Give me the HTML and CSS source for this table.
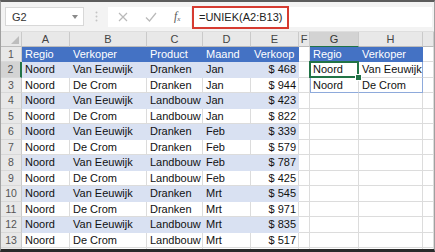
FILE: index.html
```html
<!DOCTYPE html>
<html lang="nl">
<head>
<meta charset="utf-8">
<link rel="stylesheet" href="styles.css">
</head>
<body>
<div class="frame">
  <div class="fbar">
    <div class="namebox"><span>G2</span><span class="caret"></span></div>
    <div class="grip"><svg width="3" height="11" viewBox="0 0 3 11"><circle cx="1.5" cy="1.5" r="1" fill="#c4c4c4"/><circle cx="1.5" cy="5.5" r="1" fill="#c4c4c4"/><circle cx="1.5" cy="9.5" r="1" fill="#c4c4c4"/></svg></div>
    <div class="fxbox">
      <svg class="ico" width="10" height="10" viewBox="0 0 10 10"><path d="M1 1 L9 9 M9 1 L1 9" stroke="#b9b9b9" stroke-width="1.2" fill="none"/></svg>
      <svg class="ico" width="12" height="10" viewBox="0 0 12 10"><path d="M1 5.5 L4.5 9 L11 1" stroke="#b9b9b9" stroke-width="1.2" fill="none"/></svg>
      <span class="fx">f<sub>x</sub></span>
    </div>
    <div class="formula"><span class="hl">=UNIEK(A2:B13)</span></div>
  </div>
  <div class="sheet">
    <div class="corner"><span class="tri"></span></div>
    <div class="ch">A</div><div class="ch">B</div><div class="ch">C</div><div class="ch">D</div><div class="ch">E</div><div class="ch">F</div><div class="ch sel">G</div><div class="ch">H</div><div class="ch"></div>

    <div class="rh">1</div>
    <div class="c hd">Regio</div><div class="c hd">Verkoper</div><div class="c hd">Product</div><div class="c hd">Maand</div><div class="c hd">Verkoop</div><div class="c"></div><div class="c hd">Regio</div><div class="c hd">Verkoper</div><div class="c"></div>

    <div class="rh sel">2</div>
    <div class="c bd">Noord</div><div class="c bd">Van Eeuwijk</div><div class="c bd">Dranken</div><div class="c bd">Jan</div><div class="c bd r">$ 468</div><div class="c"></div><div class="c tl active">Noord</div><div class="c tr">Van Eeuwijk</div><div class="c"></div>

    <div class="rh">3</div>
    <div class="c">Noord</div><div class="c">De Crom</div><div class="c">Dranken</div><div class="c">Jan</div><div class="c r">$ 944</div><div class="c"></div><div class="c tbl">Noord</div><div class="c tbr">De Crom</div><div class="c"></div>

    <div class="rh">4</div>
    <div class="c bd">Noord</div><div class="c bd">Van Eeuwijk</div><div class="c bd">Landbouw</div><div class="c bd">Jan</div><div class="c bd r">$ 423</div><div class="c"></div><div class="c"></div><div class="c"></div><div class="c"></div>

    <div class="rh">5</div>
    <div class="c">Noord</div><div class="c">De Crom</div><div class="c">Landbouw</div><div class="c">Jan</div><div class="c r">$ 822</div><div class="c"></div><div class="c"></div><div class="c"></div><div class="c"></div>

    <div class="rh">6</div>
    <div class="c bd">Noord</div><div class="c bd">Van Eeuwijk</div><div class="c bd">Dranken</div><div class="c bd">Feb</div><div class="c bd r">$ 339</div><div class="c"></div><div class="c"></div><div class="c"></div><div class="c"></div>

    <div class="rh">7</div>
    <div class="c">Noord</div><div class="c">De Crom</div><div class="c">Dranken</div><div class="c">Feb</div><div class="c r">$ 579</div><div class="c"></div><div class="c"></div><div class="c"></div><div class="c"></div>

    <div class="rh">8</div>
    <div class="c bd">Noord</div><div class="c bd">Van Eeuwijk</div><div class="c bd">Landbouw</div><div class="c bd">Feb</div><div class="c bd r">$ 787</div><div class="c"></div><div class="c"></div><div class="c"></div><div class="c"></div>

    <div class="rh">9</div>
    <div class="c">Noord</div><div class="c">De Crom</div><div class="c">Landbouw</div><div class="c">Feb</div><div class="c r">$ 425</div><div class="c"></div><div class="c"></div><div class="c"></div><div class="c"></div>

    <div class="rh">10</div>
    <div class="c bd">Noord</div><div class="c bd">Van Eeuwijk</div><div class="c bd">Dranken</div><div class="c bd">Mrt</div><div class="c bd r">$ 545</div><div class="c"></div><div class="c"></div><div class="c"></div><div class="c"></div>

    <div class="rh">11</div>
    <div class="c">Noord</div><div class="c">De Crom</div><div class="c">Dranken</div><div class="c">Mrt</div><div class="c r">$ 971</div><div class="c"></div><div class="c"></div><div class="c"></div><div class="c"></div>

    <div class="rh">12</div>
    <div class="c bd">Noord</div><div class="c bd">Van Eeuwijk</div><div class="c bd">Landbouw</div><div class="c bd">Mrt</div><div class="c bd r">$ 835</div><div class="c"></div><div class="c"></div><div class="c"></div><div class="c"></div>

    <div class="rh">13</div>
    <div class="c">Noord</div><div class="c">De Crom</div><div class="c">Landbouw</div><div class="c">Mrt</div><div class="c r">$ 517</div><div class="c"></div><div class="c"></div><div class="c"></div><div class="c"></div>

    <div class="rh"></div>
    <div class="c"></div><div class="c"></div><div class="c"></div><div class="c"></div><div class="c"></div><div class="c"></div><div class="c"></div><div class="c"></div><div class="c"></div>
  </div>
</div>
</body>
</html>
```
FILE: styles.css
```css
html, body {
  margin: 0;
  padding: 0;
  background: #fff;
}
.frame {
  width: 435px;
  height: 252px;
  box-sizing: border-box;
  border-top: 2px solid #5c5c5c;
  border-bottom: 3px solid #2a2a2a;
  border-left: 1px solid #a0a0a0;
  border-right: 1px solid #a0a0a0;
  overflow: hidden;
  font-family: "Liberation Sans", Arial, sans-serif;
  background: #fff;
}
.fbar {
  height: 30px;
  box-sizing: border-box;
  background: #f3f3f3;
  display: flex;
  align-items: center;
  padding: 0 2px 0 4px;
  border-bottom: 1px solid #dedede;
}
.namebox {
  width: 79px;
  height: 19px;
  box-sizing: border-box;
  background: #fff;
  border: 1px solid #d8d8d8;
  display: flex;
  align-items: center;
  justify-content: space-between;
  padding: 0 5px 0 6px;
  font-size: 11px;
  color: #333;
}
.caret {
  width: 0;
  height: 0;
  border-left: 3px solid transparent;
  border-right: 3px solid transparent;
  border-top: 4px solid #8a8a8a;
}
.grip {
  width: 24px;
  display: flex;
  justify-content: center;
  align-items: center;
}
.fxbox {
  width: 83px;
  height: 20px;
  box-sizing: border-box;
  background: #fff;
  display: flex;
  align-items: center;
  padding-left: 10px;
}
.fxbox .ico:first-child {
  margin-right: 17px;
}
.fx {
  margin-left: 17px;
  font-family: "Liberation Serif", serif;
  font-style: italic;
  font-size: 11.5px;
  color: #555;
}
.fx sub {
  font-size: 7px;
  vertical-align: -1px;
}
.formula {
  flex: 1;
  height: 20px;
  margin-left: 1px;
  background: #fff;
  display: flex;
  align-items: center;
}
.hl {
  height: 23px;
  box-sizing: border-box;
  border: 2px solid #d63b31;
  display: flex;
  align-items: center;
  padding: 0 5px;
  font-size: 11px;
  color: #222;
  margin-top: 1px;
}
.sheet {
  display: grid;
  grid-template-columns: 21px 48px 77px 56px 48px 48px 11px 49px 64px 1fr;
  grid-template-rows: 14.5px repeat(14, 15.5px);
  font-size: 11px;
}
.corner {
  background: #e8e8e8;
  border-right: 1px solid #cacaca;
  border-bottom: 1px solid #bcbcbc;
  box-sizing: border-box;
  position: relative;
}
.tri {
  position: absolute;
  right: 2px;
  bottom: 2px;
  width: 0;
  height: 0;
  border-left: 8px solid transparent;
  border-bottom: 8px solid #bdbdbd;
}
.ch {
  background: #e8e8e8;
  border-right: 1px solid #cacaca;
  border-bottom: 1px solid #bcbcbc;
  box-sizing: border-box;
  color: #444;
  font-size: 11px;
  display: flex;
  align-items: center;
  justify-content: center;
}
.ch.sel {
  background: #d3d3d3;
  color: #333;
  border-bottom: 1px solid #217346;
}
.rh {
  background: #e8e8e8;
  border-right: 1px solid #cacaca;
  border-bottom: 1px solid #d8d8d8;
  box-sizing: border-box;
  color: #555;
  font-size: 10.5px;
  display: flex;
  align-items: center;
  justify-content: center;
}
.rh.sel {
  background: #d3d3d3;
  border-right: 2px solid #217346;
}
.c {
  border-right: 1px solid #dcdcdc;
  border-bottom: 1px solid #dcdcdc;
  box-sizing: border-box;
  display: flex;
  align-items: center;
  padding: 0 3px;
  color: #111;
  white-space: nowrap;
  min-width: 0;
}
.c.r {
  justify-content: flex-end;
  padding-right: 2px;
}
.c.hd {
  background: #4472c4;
  color: #fff;
  border-right-color: #4472c4;
  border-bottom-color: #4472c4;
}
.c.bd {
  background: #d9e1f2;
  border-right-color: #d9e1f2;
  border-bottom-color: #d9e1f2;
}
.c.tl {
  box-shadow: inset 1px 0 0 #8eaadb;
}
.c.tr {
  border-right-color: #8eaadb;
}
.c.tbl {
  box-shadow: inset 1px 0 0 #8eaadb;
  border-bottom-color: #8eaadb;
}
.c.tbr {
  border-right-color: #8eaadb;
  border-bottom-color: #8eaadb;
}
.c.active {
  position: relative;
}
.c.active::after {
  content: "";
  position: absolute;
  left: -1px;
  top: -1px;
  right: -1px;
  bottom: -1px;
  border: 2px solid #217346;
}
.c.active::before {
  content: "";
  position: absolute;
  right: -4px;
  bottom: -4px;
  width: 5px;
  height: 5px;
  background: #217346;
  border: 1px solid #fff;
  z-index: 2;
}
```
